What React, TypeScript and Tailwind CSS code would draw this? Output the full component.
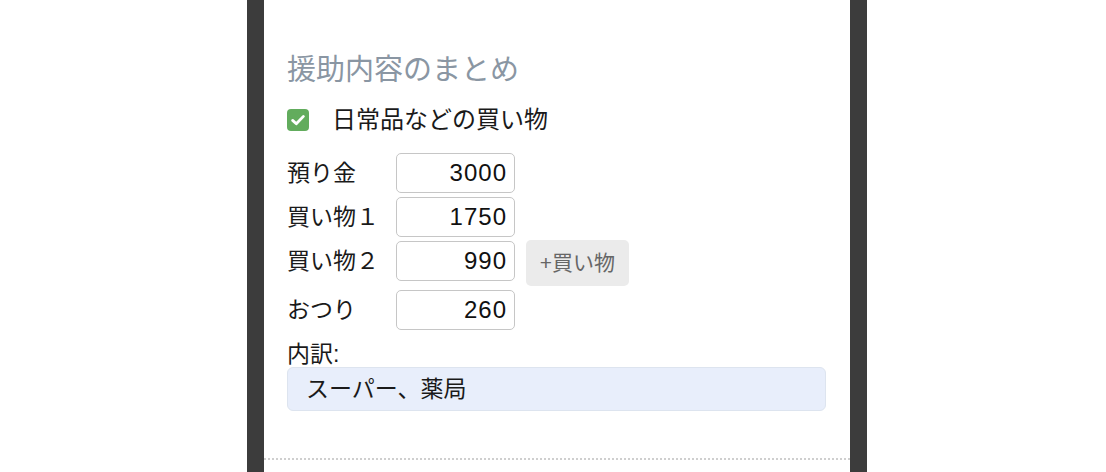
import React from "react";

const rows: { label: string; value: string; button?: boolean }[] = [
  { label: "預り金", value: "3000" },
  { label: "買い物１", value: "1750" },
  { label: "買い物２", value: "990", button: true },
  { label: "おつり", value: "260" },
];

export default function App() {
  return (
    <div
      className="w-[1106px] h-[472px] bg-white flex overflow-hidden"
      style={{ fontFamily: '"Liberation Sans", "Noto Sans CJK JP", sans-serif' }}
    >
      <div className="ml-[247px] w-[620px] h-full bg-[#3c3c3c] px-[17px]">
        <div className="h-full bg-white flex flex-col">
          <div className="pl-[23px] pr-[24px] pt-[50px] pb-[47px] flex flex-col">
            <h2 className="text-[29px] leading-[40px] text-[#8a96a3]">援助内容のまとめ</h2>
            <label className="mt-[15px] flex items-center gap-[23px] h-[30px]">
              <span className="w-[22px] h-[22px] rounded-[4px] bg-[#62ac5d] flex items-center justify-center">
                <svg width="16" height="16" viewBox="0 0 16 16" fill="none">
                  <path d="M2.6 8.4 L6.3 11.8 L13.4 4.4" stroke="white" strokeWidth="2.8" strokeLinecap="round" strokeLinejoin="round" />
                </svg>
              </span>
              <span className="text-[24px] text-[#1a1a1a]">日常品などの買い物</span>
            </label>
            <div className="mt-[18px] flex flex-col gap-[4px]">
              {rows.map((r) => (
                <div key={r.label} className="flex items-start">
                  <span className="w-[109px] h-[40px] flex items-center text-[23px] text-[#1a1a1a]">{r.label}</span>
                  <div className="w-[119px] h-[40px] border border-[#c6c6c6] rounded-[5px] flex items-center justify-end pr-[7px] text-[24px] tracking-[1px] text-[#111]">
                    {r.value}
                  </div>
                  {r.button && (
                    <div className="ml-[11px] -mt-[1px] w-[103px] h-[46px] rounded-[5px] bg-[#ebebeb] text-[#666] text-[21px] flex items-center justify-center">
                      +買い物
                    </div>
                  )}
                </div>
              ))}
            </div>
            <span className="mt-[12px] text-[23px] leading-[24px] text-[#1a1a1a]">内訳:</span>
            <div className="mt-[1px] h-[44px] rounded-[6px] border border-[#dde4ef] bg-[#e8eefb] flex items-center px-[18px] text-[23px] text-[#1a1a1a]">
              スーパー、薬局
            </div>
          </div>
          <div className="border-t-2 border-dotted border-[#cfcfcf]" />
        </div>
      </div>
    </div>
  );
}
